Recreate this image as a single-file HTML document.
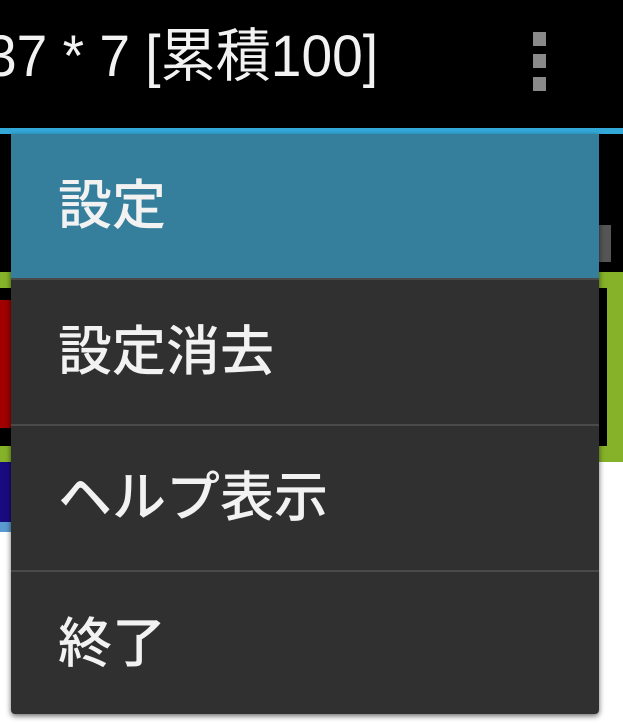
<!DOCTYPE html>
<html><head><meta charset="utf-8"><style>
html,body{margin:0;padding:0;width:623px;height:723px;overflow:hidden;background:#000;position:relative;font-family:"Liberation Sans","Noto Sans CJK JP",sans-serif}
.abs{position:absolute}
.title{left:-14px;top:22px;color:#f2f2f2;font-size:58px;line-height:70px;white-space:nowrap;transform:scaleX(0.95);transform-origin:0 0}
.dot{left:533px;width:13px;height:14px;background:#8a8a8a}
.menu{left:11px;top:134px;width:588px;height:580px;background:#303030;border-radius:0 0 4px 4px;box-shadow:0 2px 6px rgba(0,0,0,.6)}
.item{position:absolute;left:0;width:588px;height:144px;color:#f2f2f2;font-size:54px;font-weight:500;line-height:144px;padding-left:47px;box-sizing:border-box}
.div{position:absolute;left:0;width:588px;height:2px;background:#4a4a4a}
</style></head><body>
<div class="abs title">37 * 7 [累積100]</div>
<div class="abs dot" style="top:32px"></div>
<div class="abs dot" style="top:54px"></div>
<div class="abs dot" style="top:77px"></div>
<div class="abs" style="left:0;top:128px;width:623px;height:6px;background:#33a9d9"></div>
<div class="abs" style="left:0;top:272px;width:623px;height:190px;background:#86b22a"></div>
<div class="abs" style="left:0;top:288px;width:607px;height:158px;background:#000"></div>
<div class="abs" style="left:0;top:300px;width:11px;height:128px;background:#a00000"></div>
<div class="abs" style="left:0;top:462px;width:623px;height:261px;background:#fff"></div>
<div class="abs" style="left:0;top:462px;width:11px;height:60px;background:#1a0a80"></div>
<div class="abs" style="left:0;top:522px;width:11px;height:10px;background:#5a9ad0"></div>
<div class="abs" style="left:599px;top:225px;width:12px;height:37px;background:#555"></div>
<div class="abs menu">
  <div class="item" style="top:0;background:#357f9c">設定</div>
  <div class="div" style="top:144px"></div>
  <div class="item" style="top:146px">設定消去</div>
  <div class="div" style="top:290px"></div>
  <div class="item" style="top:292px">ヘルプ表示</div>
  <div class="div" style="top:436px"></div>
  <div class="item" style="top:438px">終了</div>
</div>
</body></html>
